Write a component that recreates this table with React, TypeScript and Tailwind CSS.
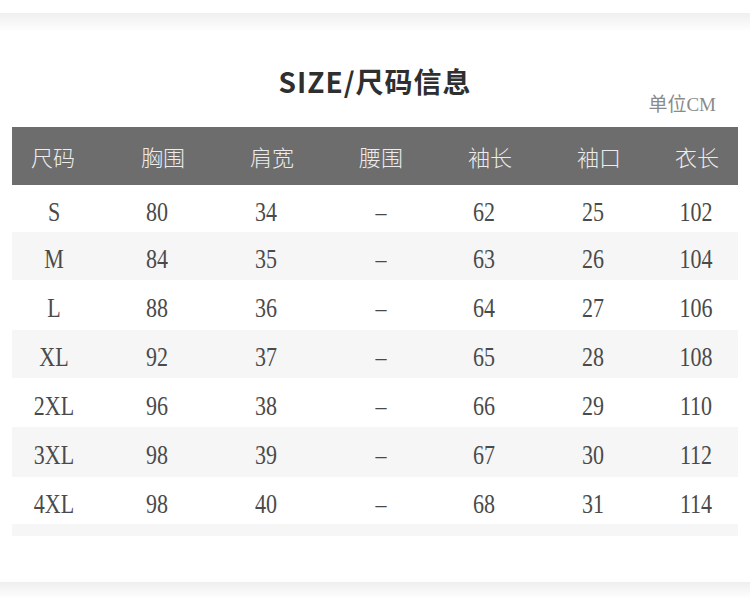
import React from "react";

const headers = ["尺码", "胸围", "肩宽", "腰围", "袖长", "袖口", "衣长"];

const rows = [
  { cells: ["S", "80", "34", "–", "62", "25", "102"], h: "h-[47px]", shade: false },
  { cells: ["M", "84", "35", "–", "63", "26", "104"], h: "h-[48px]", shade: true },
  { cells: ["L", "88", "36", "–", "64", "27", "106"], h: "h-[50px]", shade: false },
  { cells: ["XL", "92", "37", "–", "65", "28", "108"], h: "h-[48px]", shade: true },
  { cells: ["2XL", "96", "38", "–", "66", "29", "110"], h: "h-[49px]", shade: false },
  { cells: ["3XL", "98", "39", "–", "67", "30", "112"], h: "h-[50px]", shade: true },
  { cells: ["4XL", "98", "40", "–", "68", "31", "114"], h: "h-[47px]", shade: false },
];

const serif = "font-['Liberation_Serif','Noto_Sans_CJK_SC',serif]";

const App = () => {
  return (
    <div className="w-[750px] h-[616px] bg-white overflow-hidden flex flex-col">
      <div className="mt-[13px] h-[19px] bg-gradient-to-b from-[#efefef] via-[#f7f7f7] to-white" />

      <div className="h-[95px] flex flex-col">
        <h1 className="mt-[34px] h-[30px] text-center text-[28px] leading-[30px] font-bold tracking-[1px] text-[#2f2f2f] font-['Noto_Sans_CJK_SC',sans-serif]">
          SIZE/尺码信息
        </h1>
        <div className={`self-end mr-[34px] mt-[-2px] h-[22px] text-[19px] leading-[22px] text-[#8a8a8a] ${serif}`}>
          单位CM
        </div>
      </div>

      <div className="mx-[12px]">
        <div className="h-[58px] bg-[#6d6d6d] grid grid-cols-[82px_138px_80px_138px_80px_138px_58px] items-center text-[22px] text-[#ececec] font-light font-['Noto_Sans_CJK_SC',sans-serif]">
          {headers.map((t) => (
            <div key={t} className="text-center">
              {t}
            </div>
          ))}
        </div>

        {rows.map((r) => (
          <div
            key={r.cells[0]}
            className={`${r.h} ${r.shade ? "bg-[#f6f6f6]" : "bg-white"} grid grid-cols-[84px_122px_96px_134px_72px_146px_60px] items-center pt-[5px] text-[22px] text-[#4a4a4a] ${serif}`}
          >
            {r.cells.map((c, i) => (
              <div key={i} className="text-center">
                <span className="inline-block scale-y-[1.25]">{c}</span>
              </div>
            ))}
          </div>
        ))}

        <div className="h-[12px] bg-[#f6f6f6]" />
      </div>

      <div className="mt-[46px] h-[17px] bg-gradient-to-b from-[#efefef] via-[#f7f7f7] to-white" />
    </div>
  );
};

export default App;
